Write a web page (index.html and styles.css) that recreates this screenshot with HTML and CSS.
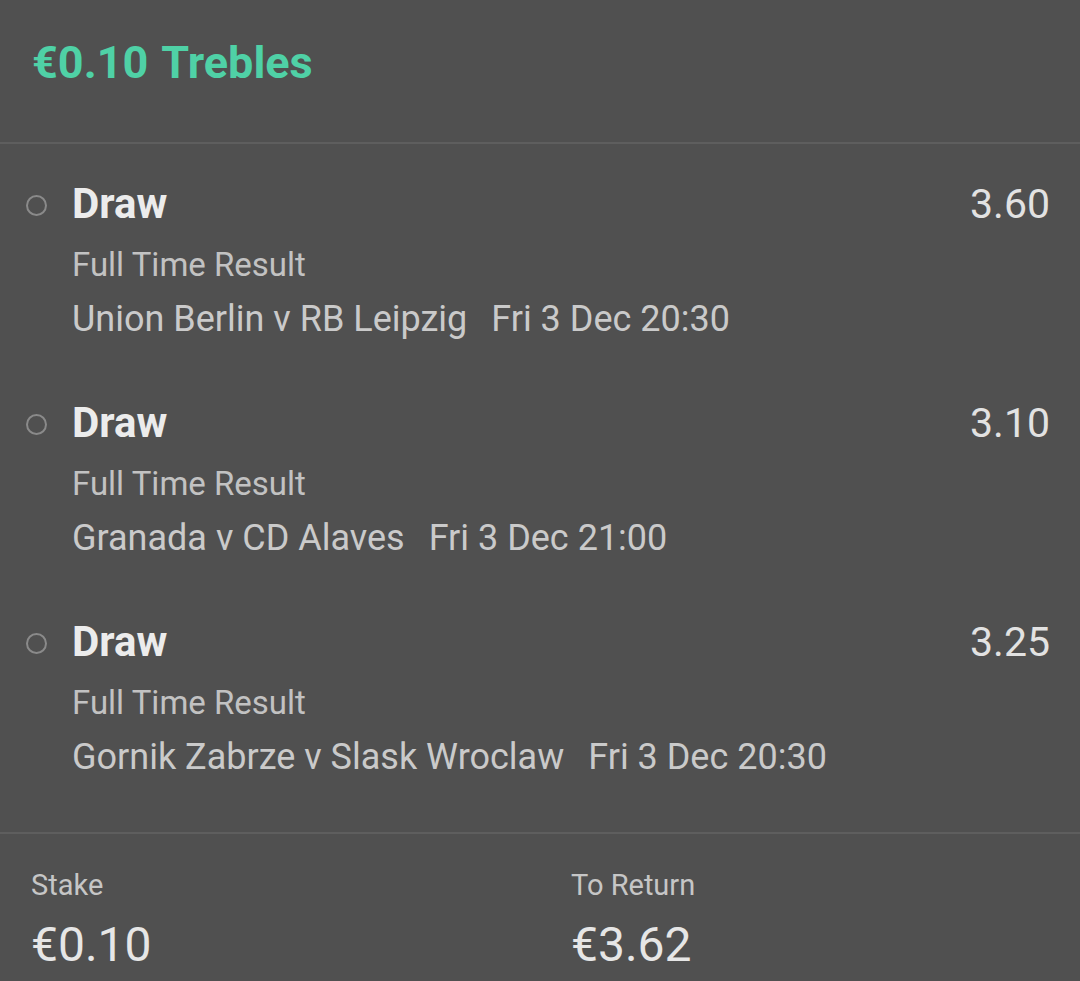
FILE: index.html
```html
<!DOCTYPE html>
<html>
<head>
<meta charset="utf-8">
<link rel="stylesheet" href="styles.css">
</head>
<body>
<div class="slip">
  <div class="header"><h1 class="title">€0.10 Trebles</h1></div>
  <div class="legs">
    <div class="leg">
      <div class="dot"></div>
      <div class="info">
        <div class="top"><span class="sel">Draw</span><span class="odds">3.60</span></div>
        <div class="market">Full Time Result</div>
        <div class="event">Union Berlin v RB Leipzig<span class="time">Fri 3 Dec 20:30</span></div>
      </div>
    </div>
    <div class="leg">
      <div class="dot"></div>
      <div class="info">
        <div class="top"><span class="sel">Draw</span><span class="odds">3.10</span></div>
        <div class="market">Full Time Result</div>
        <div class="event">Granada v CD Alaves<span class="time">Fri 3 Dec 21:00</span></div>
      </div>
    </div>
    <div class="leg">
      <div class="dot"></div>
      <div class="info">
        <div class="top"><span class="sel">Draw</span><span class="odds">3.25</span></div>
        <div class="market">Full Time Result</div>
        <div class="event">Gornik Zabrze v Slask Wroclaw<span class="time">Fri 3 Dec 20:30</span></div>
      </div>
    </div>
  </div>
  <div class="footer">
    <div class="col stake"><div class="label">Stake</div><div class="amount">€0.10</div></div>
    <div class="col"><div class="label">To Return</div><div class="amount">€3.62</div></div>
  </div>
</div>
</body>
</html>
```
FILE: styles.css
```css
html, body {
  margin: 0;
  padding: 0;
  background: #505050;
  font-family: Roboto, "Liberation Sans", sans-serif;
}
.slip {
  width: 1080px;
  height: 981px;
  overflow: hidden;
}
.header {
  height: 142px;
  border-bottom: 2px solid #5e5e5e;
}
.title {
  margin: 0;
  padding: 38px 0 0 32px;
  font-size: 45px;
  line-height: 50px;
  font-weight: 700;
  color: #4fd1a6;
  word-spacing: 3px;
}
.legs {
  padding-top: 36px;
  height: 652px;
  border-bottom: 2px solid #5e5e5e;
}
.leg {
  display: flex;
  height: 219px;
}
.dot {
  width: 17px;
  height: 17px;
  border: 2px solid #8a8a8a;
  border-radius: 50%;
  margin: 15px 0 0 26px;
  flex: none;
}
.info {
  flex: 1;
  margin-left: 25px;
  padding-right: 30px;
}
.top {
  display: flex;
  justify-content: space-between;
  align-items: baseline;
  height: 48px;
}
.sel {
  font-size: 42px;
  font-weight: 700;
  color: #ececec;
  line-height: 48px;
}
.odds {
  font-size: 41px;
  color: #e2e2e2;
  line-height: 48px;
}
.market {
  font-size: 33px;
  line-height: 40px;
  margin-top: 17px;
  color: #c2c2c2;
}
.event {
  font-size: 36px;
  line-height: 40px;
  margin-top: 14px;
  color: #cacaca;
}
.time {
  margin-left: 24px;
}
.footer {
  display: flex;
  padding: 34px 0 0 31px;
}
.col {
  flex: 1;
}
.col.stake {
  flex: none;
  width: 540px;
}
.label {
  font-size: 29px;
  line-height: 34px;
  color: #c6c6c6;
}
.amount {
  font-size: 48px;
  line-height: 50px;
  margin-top: 18px;
  color: #e6e6e6;
}
```
